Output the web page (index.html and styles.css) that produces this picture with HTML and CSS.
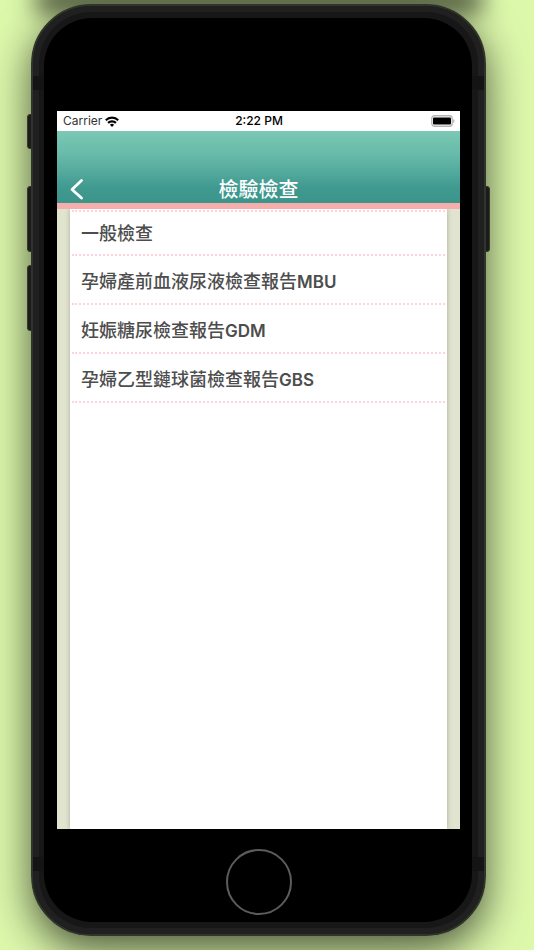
FILE: index.html
```html
<!DOCTYPE html>
<html lang="zh-Hant">
<head>
	<meta charset="utf-8">
	<meta name="viewport" content="width=device-width, initial-scale=1">
	<title>檢驗檢查</title>
	<link rel="stylesheet" href="styles.css">
</head>
<body>
	<div class="shade"></div>
	<div class="phone">
		<span class="key key-mute"></span>
		<span class="key key-up"></span>
		<span class="key key-down"></span>
		<span class="key key-power"></span>
		<div class="frame">
			<span class="band band-top"></span>
			<span class="band band-bottom"></span>
			<div class="bezel">
				<div class="screen">
					<div class="status">
						<div class="carrier">
							<span>Carrier</span>
							<svg width="14" height="11" viewBox="0 0 14 11" fill="none" stroke="#000" stroke-width="2.2">
								<path d="M0.8 4.2a8.8 8.8 0 0 1 12.4 0"/>
								<path d="M3.1 6.9a5.5 5.5 0 0 1 7.8 0"/>
								<path d="M7 10.9L4.9 8.8a3 3 0 0 1 4.2 0z" fill="#000" stroke="none"/>
							</svg>
						</div>
						<div class="time">2:22 PM</div>
						<div class="battery">
							<svg width="24" height="12" viewBox="0 0 24 12">
								<rect x="0.75" y="0.75" width="20.5" height="10.5" rx="2.8" fill="#fff" stroke="#b5b5b5" stroke-width="1.3"/>
								<rect x="2" y="2.5" width="18" height="7" rx="1" fill="#000"/>
								<path d="M22.3 4c1.6 0.6 1.6 3.4 0 4z" fill="#a8a8a8"/>
							</svg>
						</div>
					</div>
					<header class="navbar">
						<button type="button" class="back" aria-label="返回">
							<svg width="14" height="22" viewBox="0 0 14 22" fill="none" stroke="#fff" stroke-width="2.8" stroke-linecap="round" stroke-linejoin="round">
								<path d="M11.5 2.5L2 11.5L11.5 20"/>
							</svg>
						</button>
						<h1>檢驗檢查</h1>
					</header>
					<main class="content">
						<ul class="list">
							<li><a href="#">一般檢查</a></li>
							<li><a href="#">孕婦產前血液尿液檢查報告<span class="code">MBU</span></a></li>
							<li><a href="#">妊娠糖尿檢查報告<span class="code">GDM</span></a></li>
							<li><a href="#">孕婦乙型鏈球菌檢查報告<span class="code">GBS</span></a></li>
						</ul>
					</main>
				</div>
				<button type="button" class="home" aria-label="Home"></button>
			</div>
		</div>
	</div>
</body>
</html>
```

FILE: styles.css
```css
* {
	box-sizing: border-box;
}
body {
	min-height: 100vh;
	margin: 0;
	background: #dcf8ab;
	font-family: Inter, "Noto Sans CJK TC", sans-serif;
	overflow: hidden;
}

/* shadow of the device above */
.shade {
	height: 0;
	margin: 0 64px 4px 48px;
	box-shadow: 0 0 24px 12px rgba(0, 0, 0, 0.7);
}

/* device */
.phone {
	position: relative;
	margin: 0 48px 0 31px;
	border-radius: 60px;
	box-shadow: 0 14px 40px rgba(0, 0, 0, 0.65);
}
.frame {
	position: relative;
	padding: 6px;
	background: #171717;
	border: 2px solid #30352b;
	border-radius: 60px;
	box-shadow: inset 0 0 0 6px #202020;
}
.bezel {
	position: relative;
	margin: 6px 6px 6px 5px;
	padding: 93px 12px 7px 13px;
	background: #000;
	border-radius: 48px;
}
.key {
	position: absolute;
	left: -4px;
	width: 8px;
	height: 66px;
	background: #1c1c1c;
	border: 1px solid #333a2b;
	border-radius: 3px;
}
.key-mute {
	top: 110px;
	height: 35px;
}
.key-up {
	top: 182px;
}
.key-down {
	top: 261px;
}
.key-power {
	top: 182px;
	left: auto;
	right: -4px;
}
.band {
	position: absolute;
	left: 0;
	right: 0;
	height: 14px;
	background: #141414;
}
.band-top {
	top: 70px;
}
.band-bottom {
	bottom: 63px;
}
.home {
	display: block;
	width: 66px;
	height: 66px;
	margin: 20px auto 0;
	padding: 0;
	background: #000;
	border: 2px solid #5c5c5c;
	border-radius: 50%;
}

/* screen */
.screen {
	display: flex;
	flex-direction: column;
	aspect-ratio: 403 / 718;
	background: #e1e5cf;
}
.status {
	display: grid;
	grid-template-columns: 1fr auto 1fr;
	align-items: center;
	height: 20px;
	padding: 0 5px 0 6px;
	background: #fff;
	font-size: 12px;
	line-height: 20px;
}
.carrier {
	display: flex;
	align-items: center;
	gap: 3px;
	color: #333;
}
.time {
	color: #000;
	font-weight: 500;
}
.battery {
	display: flex;
	justify-content: flex-end;
}
.navbar {
	display: grid;
	grid-template-columns: 40px 1fr 40px;
	align-items: end;
	height: 78px;
	background: linear-gradient(#7bc8b5, #66b9a9 35%, #3f998f 80%, #3c958b);
	border-bottom: 6px solid #f6aeac;
}
.navbar h1 {
	grid-column: 2;
	margin: 0;
	color: #fff;
	font-size: 20px;
	font-weight: 500;
	line-height: 26px;
	text-align: center;
}
.back {
	height: 28px;
	padding: 3px 0 3px 13px;
	background: none;
	border: 0;
	text-align: left;
}
.back svg {
	display: block;
}
.content {
	display: flex;
	flex: 1;
	padding: 0 13px;
}
.list {
	flex: 1;
	margin: 0;
	padding: 1px 2px;
	background: #fff;
	box-shadow: 0 0 5px rgba(0, 0, 0, 0.25);
	list-style: none;
	clip-path: inset(0 -6px);
}
.list li {
	border-bottom: 2px dotted #ffd3da;
}
.list li:first-child {
	border-top: 2px dotted #ffd3da;
}
.list a {
	display: block;
	padding: 12px 9px 8px;
	color: #4d4d4d;
	font-size: 18px;
	font-weight: 500;
	line-height: 27px;
	text-decoration: none;
}
.list li:first-child a {
	padding: 8px 9px 7px;
}
.list .code {
	font-size: 17px;
	font-weight: 600;
	line-height: 1;
}
```
